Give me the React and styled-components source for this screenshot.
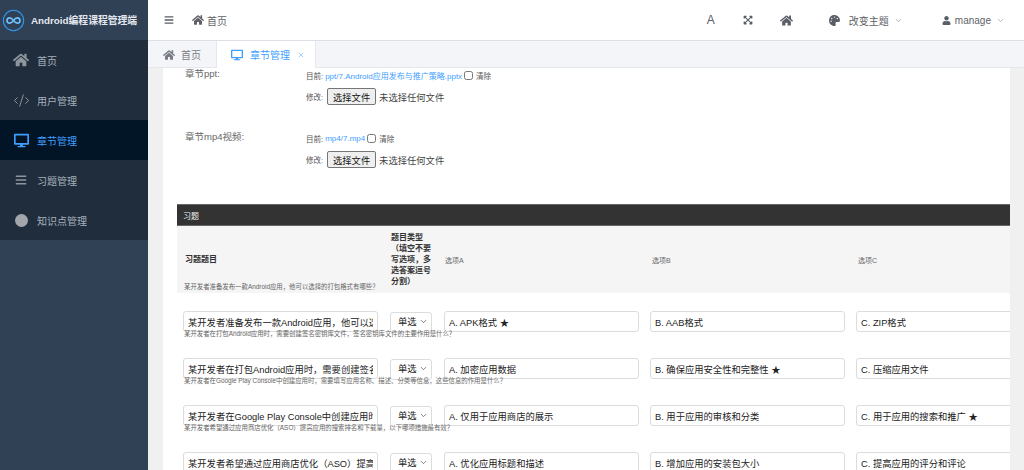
import React from 'react'
import styled, { createGlobalStyle } from 'styled-components'
import { FaHome, FaDesktop, FaBars, FaExpandArrowsAlt, FaPalette, FaUser } from 'react-icons/fa'
import { ChevronDown, CodeXml, X } from 'lucide-react'

const GlobalStyle = createGlobalStyle`
  html, body {
    margin: 0;
    height: 100%;
    overflow: hidden;
    font-family: "Liberation Sans", "Noto Sans CJK SC", sans-serif;
  }
  * { box-sizing: border-box; }
`

const NAV_ITEMS = [
  { label: '首页', icon: <FaHome size={16} /> },
  { label: '用户管理', icon: <CodeXml size={17} strokeWidth={1.4} /> },
  { label: '章节管理', icon: <FaDesktop size={15} />, active: true },
  { label: '习题管理', icon: <FaBars size={12} /> },
  { label: '知识点管理', icon: <Dot /> },
]

// full-width punctuation used by the question texts
const COMMA = '\uFF0C'
const ASK = '\uFF1F'
const OPEN = '\uFF08'
const CLOSE = '\uFF09'

const TYPE_HEAD = `题目类型${OPEN}填空不要写选项${COMMA}多选答案逗号分割${CLOSE}`

const QUESTIONS = [
  {
    title: `某开发者准备发布一款Android应用${COMMA}他可以选择的打包格式有哪些${ASK}`,
    a: 'A. APK格式 ★',
    b: 'B. AAB格式',
    c: 'C. ZIP格式',
  },
  {
    title: `某开发者在打包Android应用时${COMMA}需要创建签名密钥库文件${COMMA}签名密钥库文件的主要作用是什么${ASK}`,
    a: 'A. 加密应用数据',
    b: 'B. 确保应用安全性和完整性 ★',
    c: 'C. 压缩应用文件',
  },
  {
    title: `某开发者在Google Play Console中创建应用时${COMMA}需要填写应用名称、描述、分类等信息${COMMA}这些信息的作用是什么${ASK}`,
    a: 'A. 仅用于应用商店的展示',
    b: 'B. 用于应用的审核和分类',
    c: 'C. 用于应用的搜索和推广 ★',
  },
  {
    title: `某开发者希望通过应用商店优化${OPEN}ASO${CLOSE}提高应用的搜索排名和下载量${COMMA}以下哪项措施最有效${ASK}`,
    a: 'A. 优化应用标题和描述',
    b: 'B. 增加应用的安装包大小',
    c: 'C. 提高应用的评分和评论',
  },
]

function Dot() {
  return <DotShape />
}

const Logo = () => (
  <svg width="23" height="23" viewBox="0 0 24 24" fill="none">
    <circle cx="12" cy="12" r="10.6" stroke="#2f9bf0" strokeWidth="1.1" />
    <path
      d="M12 12c-1.3-1.8-2.5-2.8-4-2.8a2.8 2.8 0 0 0 0 5.6c1.5 0 2.7-1 4-2.8zm0 0c1.3-1.8 2.5-2.8 4-2.8a2.8 2.8 0 0 1 0 5.6c-1.5 0-2.7-1-4-2.8z"
      stroke="#6fc0ff"
      strokeWidth="1.7"
    />
  </svg>
)

const App = () => {
  return (
    <Page>
      <GlobalStyle />
      <Sidebar>
        <Brand>
          <Logo />
          <BrandName>Android编程课程管理端</BrandName>
        </Brand>
        <Nav>
          {NAV_ITEMS.map((item) => (
            <NavItem key={item.label} $active={item.active}>
              <NavIcon $active={item.active}>{item.icon}</NavIcon>
              {item.label}
            </NavItem>
          ))}
        </Nav>
      </Sidebar>

      <Main>
        <Header>
          <FaBars size={10} />
          <Crumb>
            <FaHome size={12} />
            首页
          </Crumb>
          <Tools>
            <FontGlyph>A</FontGlyph>
            <FaExpandArrowsAlt size={10} />
            <FaHome size={13} />
          </Tools>
          <Menu $left={36}>
            <FaPalette size={11} />
            <MenuText $gap={9}>改变主题</MenuText>
            <ChevronDown size={9} strokeWidth={1.2} color="#666" />
          </Menu>
          <Menu $left={39}>
            <FaUser size={9} />
            <MenuText $gap={4}>manage</MenuText>
            <ChevronDown size={9} strokeWidth={1.2} color="#666" />
          </Menu>
        </Header>

        <TabBar>
          <Tab>
            <FaHome size={12} />
            首页
          </Tab>
          <Tab $active>
            <FaDesktop size={12} />
            章节管理
            <X size={8} strokeWidth={1.5} />
          </Tab>
        </TabBar>

        <Content>
          <Card>
            <Field>
              <FieldLabel>章节ppt:</FieldLabel>
              <FieldBody>
                <Current>
                  目前: <FileLink>ppt/7.Android应用发布与推广策略.pptx</FileLink>
                  <Check type="checkbox" />
                  清除
                </Current>
                <Change>
                  修改:
                  <FileButton type="button">选择文件</FileButton>
                  <NoFile>未选择任何文件</NoFile>
                </Change>
              </FieldBody>
            </Field>
            <Field>
              <FieldLabel>章节mp4视频:</FieldLabel>
              <FieldBody>
                <Current>
                  目前: <FileLink>mp4/7.mp4</FileLink>
                  <Check type="checkbox" />
                  清除
                </Current>
                <Change>
                  修改:
                  <FileButton type="button">选择文件</FileButton>
                  <NoFile>未选择任何文件</NoFile>
                </Change>
              </FieldBody>
            </Field>

            <Inline>
              <InlineTitle>习题</InlineTitle>
              <HeadRow>
                <HeadStrong>习题题目</HeadStrong>
                <HeadStrong>{TYPE_HEAD}</HeadStrong>
                <HeadCell>选项A</HeadCell>
                <HeadCell>选项B</HeadCell>
                <HeadCell>选项C</HeadCell>
              </HeadRow>
              {QUESTIONS.map((q) => (
                <Row key={q.title}>
                  <Help>{q.title}</Help>
                  <TextInput readOnly defaultValue={q.title} />
                  <SelectWrap>
                    <TypeSelect defaultValue="单选">
                      <option>单选</option>
                      <option>多选</option>
                      <option>填空</option>
                    </TypeSelect>
                    <SelectArrow>
                      <ChevronDown size={9} strokeWidth={1.6} />
                    </SelectArrow>
                  </SelectWrap>
                  <TextInput readOnly defaultValue={q.a} />
                  <TextInput readOnly defaultValue={q.b} />
                  <TextInput readOnly defaultValue={q.c} />
                </Row>
              ))}
            </Inline>
          </Card>
        </Content>
      </Main>
    </Page>
  )
}

export default App

const Page = styled.div`
  display: flex;
  width: 1024px;
  height: 470px;
  overflow: hidden;
`

const Sidebar = styled.aside`
  width: 148px;
  flex-shrink: 0;
  background: #304156;
  display: flex;
  flex-direction: column;
`

const Brand = styled.div`
  height: 40px;
  padding-left: 2px;
  display: flex;
  align-items: center;
  gap: 6px;
  background: #304156;
`

const BrandName = styled.span`
  color: #e4e8ee;
  font-size: 9.8px;
  font-weight: 700;
  white-space: nowrap;
`

const Nav = styled.nav`
  background: #1f2d3d;
`

const NavItem = styled.div`
  height: 40px;
  padding-left: 12px;
  display: flex;
  align-items: center;
  font-size: 10px;
  color: ${({ $active }) => ($active ? '#409eff' : '#a7b0bb')};
  background: ${({ $active }) => ($active ? '#021526' : 'transparent')};
`

const NavIcon = styled.span`
  width: 18px;
  margin-right: 7px;
  display: flex;
  justify-content: center;
  color: ${({ $active }) => ($active ? '#409eff' : '#8f959c')};
`

const DotShape = styled.span`
  width: 13px;
  height: 13px;
  border-radius: 50%;
  background: #a3a7ac;
`

const Main = styled.div`
  flex: 1;
  min-width: 0;
  display: flex;
  flex-direction: column;
  background: #f0f0f0;
`

const Header = styled.header`
  height: 41px;
  padding: 0 19px 0 16px;
  display: flex;
  align-items: center;
  background: #fff;
  border-bottom: 1px solid #dcdfe6;
  color: #5a5e66;
`

const Crumb = styled.div`
  margin-left: 18px;
  display: flex;
  align-items: center;
  gap: 3px;
  font-size: 10px;
  color: #606266;
`

const Tools = styled.div`
  margin-left: auto;
  display: flex;
  align-items: center;
  gap: 27px;
`

const FontGlyph = styled.span`
  font-size: 12px;
  width: 9px;
`

const Menu = styled.div`
  margin-left: ${({ $left }) => $left}px;
  display: flex;
  align-items: center;
`

const MenuText = styled.span`
  margin: 0 5px 0 ${({ $gap }) => $gap}px;
  font-size: 10px;
  color: #606266;
`

const TabBar = styled.div`
  height: 27px;
  flex-shrink: 0;
  display: flex;
  background: #f3f5f9;
  border-bottom: 1px solid #e4e7ed;
`

const Tab = styled.div`
  width: ${({ $active }) => ($active ? '100px' : '68px')};
  height: 27px;
  padding-left: ${({ $active }) => ($active ? '14px' : '15px')};
  display: flex;
  align-items: center;
  gap: ${({ $active }) => ($active ? '7px' : '6px')};
  font-size: 10px;
  color: ${({ $active }) => ($active ? '#409eff' : '#777c85')};
  background: ${({ $active }) => ($active ? '#fff' : 'transparent')};
  border-left: ${({ $active }) => ($active ? '1px solid #e4e7ed' : 'none')};
  border-right: ${({ $active }) => ($active ? '1px solid #e4e7ed' : 'none')};
`

const Content = styled.div`
  flex: 1;
  min-height: 0;
  padding: 0 14px 0 15px;
  overflow: hidden;
`

const Card = styled.div`
  height: 100%;
  padding: 0 0 0 14px;
  background: #fff;
  overflow: hidden;
`

const Field = styled.div`
  display: flex;
  padding-left: 8px;
  margin-bottom: 26px;
`

const FieldLabel = styled.div`
  width: 121px;
  flex-shrink: 0;
  font-size: 9.5px;
  line-height: 12px;
  color: #666;
`

const FieldBody = styled.div`
  display: flex;
  flex-direction: column;
  gap: 6px;
`

const Current = styled.div`
  height: 14px;
  display: flex;
  align-items: center;
  font-size: 7.5px;
  color: #555;
  white-space: pre;
`

const FileLink = styled.span`
  font-size: 8px;
  color: #409eff;
`

const Check = styled.input`
  width: 9px;
  height: 9px;
  margin: 0 3px 0 2px;
`

const Change = styled.div`
  height: 17px;
  display: flex;
  align-items: center;
  font-size: 7.5px;
  color: #555;
`

const FileButton = styled.button`
  width: 49px;
  height: 17px;
  margin-left: 4px;
  padding: 0;
  font: 9.3px "Liberation Sans", "Noto Sans CJK SC", sans-serif;
  color: #111;
  background: #efefef;
  border: 1px solid #767676;
  border-radius: 2px;
`

const NoFile = styled.span`
  margin-left: 3px;
  font-size: 9.3px;
  color: #444;
`

const Inline = styled.div`
  width: 1000px;
  margin-top: 36px;
`

const InlineTitle = styled.div`
  height: 22px;
  padding-left: 6px;
  display: flex;
  align-items: center;
  font-size: 8px;
  color: #f0f0f0;
  background: #333;
  border: 1px solid #666;
  border-width: 1px 0;
`

const HeadRow = styled.div`
  height: 67px;
  padding-left: 8px;
  display: grid;
  grid-template-columns: 195px 43px 196px 195px 195px;
  column-gap: 11px;
  align-items: center;
  background: #f5f5f5;
`

const HeadCell = styled.div`
  font-size: 7px;
  color: #666;
`

const HeadStrong = styled.div`
  font-size: 8px;
  line-height: 11px;
  font-weight: 700;
  color: #333;
`

const Row = styled.div`
  position: relative;
  padding: 18px 0 8px 6px;
  display: grid;
  grid-template-columns: 196px 43px 195px 195px 195px;
  column-gap: 11px;
`

const Help = styled.div`
  position: absolute;
  left: 7px;
  top: -11px;
  font-size: 6.4px;
  line-height: 9px;
  color: #666;
  white-space: nowrap;
`

const TextInput = styled.input`
  width: 195px;
  height: 21px;
  padding: 0 4px;
  font: 9.3px "Liberation Sans", "Noto Sans CJK SC", sans-serif;
  color: #222;
  background: #fff;
  border: 1px solid #dcdcdc;
  border-radius: 3px;
  outline: none;
`

const SelectWrap = styled.div`
  position: relative;
  width: 42px;
  height: 21px;
`

const TypeSelect = styled.select`
  appearance: none;
  width: 100%;
  height: 100%;
  padding: 0 0 0 7px;
  font: 9.3px "Liberation Sans", "Noto Sans CJK SC", sans-serif;
  color: #222;
  background: #fff;
  border: 1px solid #dcdcdc;
  border-radius: 3px;
`

const SelectArrow = styled.span`
  position: absolute;
  right: 4px;
  top: 6px;
  display: flex;
  color: #333;
  pointer-events: none;
`
